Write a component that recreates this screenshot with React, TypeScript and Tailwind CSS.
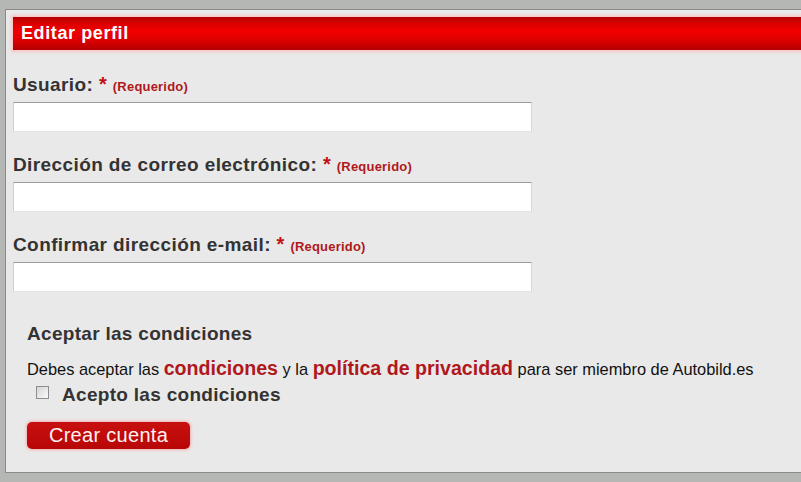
import React from "react";

const fields = [
  "Usuario:",
  "Dirección de correo electrónico:",
  "Confirmar dirección e-mail:",
];

const Field = ({ label }: { label: string }) => (
  <div className="mt-[22px] first:mt-[24px]">
    <label className="block text-[19px] leading-[22px] font-bold tracking-[0.4px] text-[#333333]">
      {label}{" "}
      <span className="text-[20px] leading-none text-[#c41010]">*</span>{" "}
      <span className="text-[13px] leading-none tracking-[0.2px] text-[#b0181c]">
        (Requerido)
      </span>
    </label>
    <input
      type="text"
      className="mt-[6px] block h-[30px] w-[519px] bg-white border border-t-[#9c9c9c] border-l-[#cfcfcf] border-r-[#d6d6d6] border-b-[#e4e4e4] outline-none"
    />
  </div>
);

const App = () => {
  return (
    <div
      className="w-[801px] h-[482px] overflow-hidden bg-[#b5b7b5] pt-[9px] pl-[5px]"
      style={{ fontFamily: '"Liberation Sans", Arial, sans-serif' }}
    >
      <div className="h-[464px] bg-[#e9e9e9] border border-r-0 border-[#8a8a8a] pt-[7px] pl-[7px]">
        {/* header */}
        <div className="h-[33px] flex items-center pl-[8px] bg-[linear-gradient(to_bottom,#b30000_0%,#dc0000_20%,#f20000_45%,#d80000_75%,#b20000_100%)] shadow-[0_0_3px_2px_#f7c4c4]">
          <h1 className="text-[18px] font-bold text-white tracking-[0.6px]">
            Editar perfil
          </h1>
        </div>

        {/* campos */}
        <div className="flex flex-col">
          {fields.map((f) => (
            <Field key={f} label={f} />
          ))}
        </div>

        {/* condiciones */}
        <div className="pl-[14px] mt-[31px]">
          <h2 className="text-[19px] leading-[22px] font-bold tracking-[0.3px] text-[#333333]">
            Aceptar las condiciones
          </h2>
          <p className="mt-[11px] text-[16.4px] leading-[24px] text-[#111111]">
            Debes aceptar las{" "}
            <a className="text-[19.6px] font-bold text-[#b0181c]">condiciones</a>{" "}
            y la{" "}
            <a className="text-[19.6px] font-bold text-[#b0181c]">
              política de privacidad
            </a>{" "}
            para ser miembro de Autobild.es
          </p>
          <div className="mt-[3px] flex items-center pl-[9px]">
            <input
              type="checkbox"
              className="appearance-none w-[13px] h-[13px] border border-[#8e8e8e] bg-[linear-gradient(135deg,#d4d4d4,#fbfbfb)] mb-[6px]"
            />
            <span className="ml-[13px] text-[19px] leading-[22px] font-bold tracking-[0.3px] text-[#333333]">
              Acepto las condiciones
            </span>
          </div>
          <button className="mt-[16px] w-[163px] h-[27px] rounded-[5px] bg-[linear-gradient(to_bottom,#c81010,#b80606)] shadow-[0_0_3px_1px_#f3b0b0] text-[20px] leading-[27px] tracking-[0.3px] text-[#fff2f2] text-center">
            Crear cuenta
          </button>
        </div>
      </div>
    </div>
  );
};

export default App;
